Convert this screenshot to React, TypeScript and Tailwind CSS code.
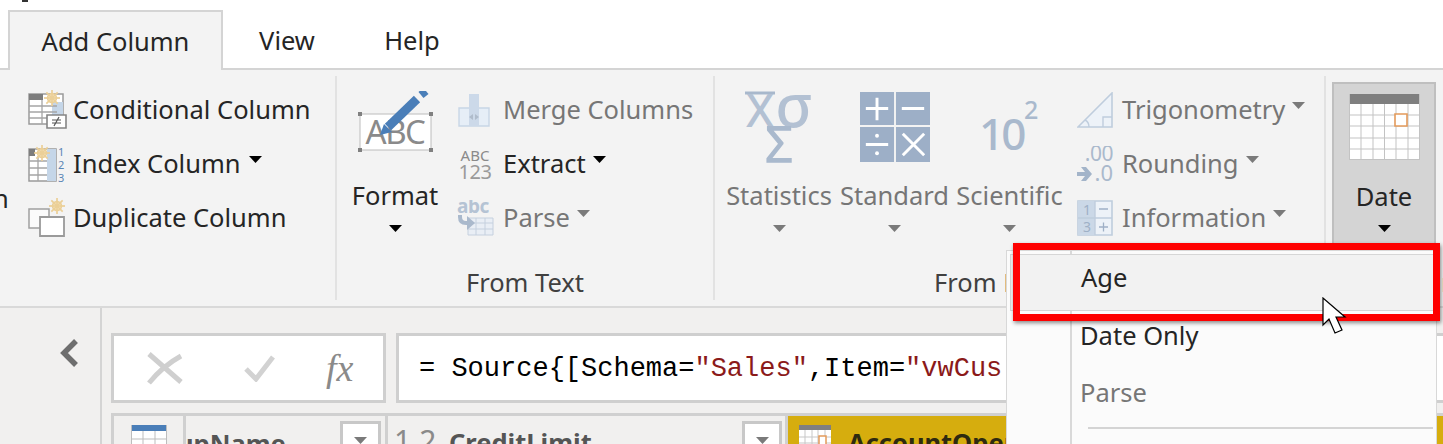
function Caret({ gray = false, className = '' }: { gray?: boolean; className?: string }) {
  return (
    <svg width="13" height="7" viewBox="0 0 13 7" className={className}>
      <path d="M0 0h13L6.500 7z" fill={gray ? '#7a7a7a' : '#000'} />
    </svg>
  );
}

function Spark({ x, y, r = 8 }: { x: number; y: number; r?: number }) {
  const rays = [0, 45, 90, 135];
  return (
    <g stroke="#ebcf97" strokeWidth="1.7">
      <circle cx={x} cy={y} r={r * 0.55} fill="#f6ecd2" />
      {rays.map((a) => (
        <line key={a} x1={x - r} y1={y} x2={x + r} y2={y} transform={`rotate(${a} ${x} ${y})`} />
      ))}
    </g>
  );
}

function ConditionalIcon() {
  return (
    <svg width="40" height="40" viewBox="0 0 40 40">
      <path d="M1 4h34v30H1z" fill="#fff" stroke="#9a9a9a" strokeWidth="1.5" />
      <path d="M1 4h14v6H1z" fill="#7d7d7d" />
      <path d="M24 12h11v14H24z" fill="#c5d6e8" />
      <path d="M1 16h28M1 22h28M1 28h28M14 10v24" stroke="#a5a5a5" strokeWidth="1.3" />
      <Spark x={24} y={8} />
      <path d="M19 25h19v13H19z" fill="#fff" stroke="#858585" strokeWidth="1.6" />
      <path d="M24 30h9M24 33h9M31 27l-5 9" stroke="#555" strokeWidth="1.2" fill="none" />
    </svg>
  );
}

function IndexIcon() {
  return (
    <svg width="40" height="40" viewBox="0 0 40 40">
      <path d="M1 5h27v32H1z" fill="#fff" stroke="#9a9a9a" strokeWidth="1.5" />
      <path d="M1 5h6v7H1z" fill="#7d7d7d" />
      <path d="M19 5h9v32h-9z" fill="#c5d6e8" />
      <path d="M1 17h18M1 24h18M1 31h18M10 12v25" stroke="#a5a5a5" strokeWidth="1.3" />
      <Spark x={14} y={9} />
      <text x="30" y="12" fontSize="11" fill="#5b86b5" fontFamily="Noto Sans, sans-serif">1</text>
      <text x="30" y="25" fontSize="11" fill="#5b86b5" fontFamily="Noto Sans, sans-serif">2</text>
      <text x="30" y="38" fontSize="11" fill="#5b86b5" fontFamily="Noto Sans, sans-serif">3</text>
    </svg>
  );
}

function DuplicateIcon() {
  return (
    <svg width="40" height="40" viewBox="0 0 40 40">
      <path d="M1 11h20v19H1z" fill="#fbfbfb" stroke="#a0a0a0" strokeWidth="1.5" />
      <path d="M12 19h24v19H12z" fill="#fff" stroke="#9a9a9a" strokeWidth="1.8" />
      <Spark x={29} y={8} />
    </svg>
  );
}

function FormatIcon() {
  return (
    <svg width="80" height="72" viewBox="0 -2 80 72">
      <path d="M5 21h71v36H5z" fill="#fff" stroke="#bcbcbc" strokeWidth="1" />
      <g fill="#808080">
        <rect x="3" y="19" width="4" height="4" />
        <rect x="74" y="19" width="4" height="4" />
        <rect x="3" y="55" width="4" height="4" />
        <rect x="74" y="55" width="4" height="4" />
      </g>
      <text x="40" y="51" textAnchor="middle" fontSize="33" fill="#8a8a8a" fontFamily="Noto Sans, sans-serif" letterSpacing="-1.500">ABC</text>
      <path d="M33 34L62 6" stroke="#4a7eb8" strokeWidth="9" fill="none" />
      <path d="M25 42l4-11 8 8z" fill="#4a7eb8" />
      <path d="M66 2l5-4" stroke="#4a7eb8" strokeWidth="8" fill="none" />
    </svg>
  );
}

function MergeIcon() {
  return (
    <svg width="32" height="34" viewBox="0 0 32 34">
      <path d="M1 15h30v18H1z" fill="#e6eef7" stroke="#c8d6e6" strokeWidth="1.4" />
      <path d="M11 1h10v32H11z" fill="#ccd9e9" />
      <path d="M11 24l4-3v6zM21 24l-4-3v6z" fill="#b0bccb" />
    </svg>
  );
}

function ExtractIcon() {
  return (
    <svg width="34" height="34" viewBox="0 0 34 34" fontFamily="Noto Sans, sans-serif">
      <text x="17" y="14" textAnchor="middle" fontSize="15" fill="#8a8a8a">ABC</text>
      <text x="17" y="32" textAnchor="middle" fontSize="20" fill="#9a9a9a" letterSpacing="-0.500">123</text>
    </svg>
  );
}

function ParseIcon() {
  return (
    <svg width="38" height="36" viewBox="0 0 38 36" fontFamily="Noto Sans, sans-serif">
      <text x="0" y="13" fontSize="19" fontWeight="700" fill="#b5c3d4" letterSpacing="-0.500">abc</text>
      <path d="M11 18h25v17H11z" fill="#e9eef5" stroke="#c5d0de" strokeWidth="1" />
      <path d="M11 23h25M11 29h25M19 18v17M28 18v17" stroke="#c5d0de" strokeWidth="1" />
      <path d="M3 15v2q0 6 6 6h4" stroke="#aab9cc" strokeWidth="4" fill="none" />
      <path d="M10 16l8 7-8 7z" fill="#aab9cc" />
    </svg>
  );
}

function StatisticsIcon() {
  return (
    <svg width="72" height="72" viewBox="0 0 72 72" fontFamily="Noto Sans, sans-serif" fill="#b3c1d3">
      <path d="M2 2h30" stroke="#a8b8cc" strokeWidth="3" />
      <text x="17" y="36" textAnchor="middle" fontSize="46" fontWeight="500">X</text>
      <text x="51" y="36" textAnchor="middle" fontSize="60" fontWeight="500">σ</text>
      <text x="36" y="71" textAnchor="middle" fontSize="50" fontWeight="500" fill="#a9b9cd">Σ</text>
    </svg>
  );
}

function StandardIcon() {
  return (
    <svg width="70" height="70" viewBox="0 0 72 72" stroke="#fff" strokeWidth="3">
      <path d="M0 0h35v34H0zM37 0h35v34H37zM0 36h35v36H0zM37 36h35v36H37z" fill="#9dafc7" stroke="none" />
      <path d="M6 17h23M17.500 6v23M43 17h23M6 54h23M44 43l22 22M66 43L44 65" fill="none" />
      <circle cx="17.500" cy="45" r="2" fill="#fff" stroke="none" />
      <circle cx="17.500" cy="63" r="2" fill="#fff" stroke="none" />
    </svg>
  );
}

function ScientificIcon() {
  return (
    <svg width="62" height="54" viewBox="0 0 62 54" fontFamily="Noto Sans, sans-serif">
      <text x="0" y="50" fontSize="44" fontWeight="500" fill="#a9b9cd" letterSpacing="-3">10</text>
      <text x="45" y="19" fontSize="25" fontWeight="500" fill="#a9b9cd">2</text>
    </svg>
  );
}

function TrigIcon() {
  return (
    <svg width="36" height="36" viewBox="0 0 36 36">
      <path d="M1 35L35 1v34z" fill="#edf2f8" stroke="#bfcddd" strokeWidth="1.6" />
      <path d="M26 35V25h9M12 35c0-4-2-6-4-7" stroke="#bfcddd" strokeWidth="1.4" fill="none" />
    </svg>
  );
}

function RoundingIcon() {
  return (
    <svg width="36" height="36" viewBox="0 0 36 36" fontFamily="Noto Sans, sans-serif">
      <text x="36" y="15" textAnchor="end" fontSize="21" fill="#aab9cc" letterSpacing="-0.500">.00</text>
      <text x="36" y="35" textAnchor="end" fontSize="22" fill="#aab9cc">.0</text>
      <path d="M0 26h8l-4-5h5l6 7-6 7H4l4-5H0z" fill="#a3b4c9" />
    </svg>
  );
}

function InformationIcon() {
  return (
    <svg width="36" height="36" viewBox="0 0 36 36" fontFamily="Noto Sans, sans-serif">
      <path d="M1 1h34v34H1z" fill="#edf2f8" stroke="#bfcddd" strokeWidth="1.6" />
      <path d="M1 1h17v34H1z" fill="#cbd8e7" />
      <path d="M1 18h34M18 1v34" stroke="#bfcddd" strokeWidth="1.4" />
      <text x="10" y="15" textAnchor="middle" fontSize="14" fill="#9fb0c6">1</text>
      <text x="10" y="32" textAnchor="middle" fontSize="14" fill="#9fb0c6">3</text>
      <path d="M22 9h9M22 27h9M26.500 22.500v9" stroke="#9fb0c6" strokeWidth="1.3" />
    </svg>
  );
}

function CalendarIcon() {
  return (
    <svg width="71" height="66" viewBox="0 0 71 66">
      <path d="M0 0h71v66H0z" fill="#fff" />
      <path d="M0 0h71v10H0z" fill="#7f7f7f" />
      <path d="M.5 0v66M70.500 0v66M0 65.500h71M12 10v56M24 10v56M35.500 10v56M47 10v56M59 10v56M0 21h71M0 32h71M0 44h71M0 55h71" stroke="#c3c3c3" strokeWidth="1" fill="none" />
      <path d="M46 20h12v12H46z" fill="#fff" stroke="#e39a5b" strokeWidth="1.6" />
    </svg>
  );
}

function TableIcon() {
  return (
    <svg width="36" height="30" viewBox="0 0 36 30">
      <path d="M0 0h36v30H0z" fill="#fff" />
      <path d="M0 0h36v6H0z" fill="#4a7eb8" />
      <path d="M.5 0v30M35.500 0v30M12 6v24M24 6v24M0 14h36M0 22h36" stroke="#bdbdbd" fill="none" />
    </svg>
  );
}

function SmallCalendarIcon() {
  return (
    <svg width="32" height="30" viewBox="0 0 32 30">
      <path d="M0 0h32v30H0z" fill="#fff" />
      <path d="M0 0h32v5H0z" fill="#7f7f7f" />
      <path d="M6 5v25M13 5v25M19 5v25M26 5v25M0 12h32M0 18h32M0 24h32" stroke="#c7c7c7" fill="none" />
      <path d="M20 11h7v9h-7z" fill="#fff" stroke="#e39a5b" strokeWidth="1.5" />
    </svg>
  );
}

function CursorIcon() {
  return (
    <svg width="26" height="40" viewBox="0 0 26 40">
      <path d="M1 1v27l6-6 6 14 7-3-6-13h9z" fill="#fff" stroke="#000" strokeWidth="1.2" />
    </svg>
  );
}

function SmallRow({
  icon,
  label,
  caret,
  muted,
  caretGap = 'ml-[7px]',
  iconBox = 'w-[45px]',
}: {
  icon: React.ReactNode;
  label: string;
  caret?: boolean;
  muted?: boolean;
  caretGap?: string;
  iconBox?: string;
}) {
  return (
    <div className="flex h-[54px] items-center">
      <div className={`flex shrink-0 items-center ${iconBox}`}>{icon}</div>
      <span className={`whitespace-nowrap ${muted ? 'text-[#767676]' : 'text-[#252525]'}`}>{label}</span>
      {caret && <Caret gray={muted} className={`mb-[9px] ${caretGap}`} />}
    </div>
  );
}

function LargeButton({ icon, label, muted, width }: { icon: React.ReactNode; label: string; muted?: boolean; width: string }) {
  return (
    <div className={`flex shrink-0 flex-col items-center ${width}`}>
      <div className="flex h-[84px] items-center pt-[4px]">{icon}</div>
      <span className={`mt-[10px] h-[36px] leading-[36px] ${muted ? 'text-[#767676]' : 'text-[#252525]'}`}>{label}</span>
      <Caret gray={muted} className="mt-[12px]" />
    </div>
  );
}

export default function App() {
  return (
    <div className="relative h-[444px] w-[1443px] overflow-hidden bg-white font-['Noto_Sans',sans-serif] text-[25.5px] leading-none">
      <div className="absolute left-[22px] top-0 h-[2px] w-[6px] bg-[#333]" />

      {/* tabs */}
      <div className="flex h-[70px] items-end border-b-2 border-[#d4d4d4] pl-[8px]">
        <div className="-mb-[2px] flex h-[60px] w-[215px] items-center justify-center border-x-2 border-t-2 border-[#d4d4d4] bg-[#f3f3f3] pt-[2px] text-[#252525]">
          Add Column
        </div>
        <div className="flex h-[58px] w-[128px] items-center justify-center pt-[4px] text-[#252525]">View</div>
        <div className="flex h-[58px] w-[122px] items-center justify-center pt-[4px] text-[#252525]">Help</div>
      </div>

      {/* ribbon */}
      <div className="flex h-[238px] border-b-2 border-[#d9d9d9] bg-[#f3f3f3]">
        <div className="relative my-[6px] w-[337px] shrink-0 border-r-2 border-[#e2e2e2] pl-[28px] pt-[7px]">
          <span className="absolute left-[-7px] top-[110px] text-[#252525]">n</span>
          <SmallRow icon={<ConditionalIcon />} label="Conditional Column" />
          <SmallRow icon={<IndexIcon />} label="Index Column" caret caretGap="ml-[8px]" />
          <SmallRow icon={<DuplicateIcon />} label="Duplicate Column" />
        </div>

        <div className="my-[6px] flex w-[378px] shrink-0 flex-col border-r-2 border-[#e2e2e2]">
          <div className="flex pt-[7px]">
            <LargeButton icon={<FormatIcon />} label="Format" width="w-[116px]" />
            <div className="pl-[5px]">
              <SmallRow icon={<MergeIcon />} label="Merge Columns" muted />
              <SmallRow icon={<ExtractIcon />} label="Extract" caret />
              <SmallRow icon={<div className="-ml-[1px]"><ParseIcon /></div>} label="Parse" caret muted />
            </div>
          </div>
          <div className="mt-[25px] text-center text-[#404040]">From Text</div>
        </div>

        <div className="my-[6px] flex w-[611px] shrink-0 flex-col border-r-2 border-[#e2e2e2]">
          <div className="flex pl-[6px] pt-[7px]">
            <LargeButton icon={<StatisticsIcon />} label="Statistics" muted width="w-[116px]" />
            <LargeButton icon={<StandardIcon />} label="Standard" muted width="w-[115px]" />
            <LargeButton icon={<ScientificIcon />} label="Scientific" muted width="w-[115px]" />
            <div className="pl-[10px]">
              <SmallRow icon={<TrigIcon />} label="Trigonometry" caret muted />
              <SmallRow icon={<RoundingIcon />} label="Rounding" caret muted />
              <SmallRow icon={<InformationIcon />} label="Information" caret muted />
            </div>
          </div>
          <div className="mt-[25px] pl-[219px] text-[#404040]">From Number</div>
        </div>

        <div className="ml-[6px] mt-[12px] flex h-[164px] w-[104px] shrink-0 flex-col items-center border-2 border-[#bfbfbf] bg-[#d4d4d4]">
          <div className="flex h-[86px] items-center"><CalendarIcon /></div>
          <span className="mt-[8px] h-[36px] leading-[36px] text-[#252525]">Date</span>
          <Caret className="mt-[11px]" />
        </div>
      </div>

      {/* formula bar and table header */}
      <div className="flex h-[136px] bg-[#f1f0ef]">
        <div className="flex h-full w-[102px] shrink-0 justify-center border-r-2 border-[#d4d4d4] pl-[40px] pt-[31px]">
          <svg width="20" height="28" viewBox="0 0 20 28">
            <path d="M16 2L4 14l12 12" fill="none" stroke="#6e6e6e" strokeWidth="5.500" />
          </svg>
        </div>
        <div className="min-w-0 flex-1 pl-[9px] pt-[25px]">
          <div className="flex gap-[10px]">
            <div className="flex h-[70px] w-[275px] shrink-0 items-center border-[3px] border-[#cfcfcf] bg-white pl-[32px]">
              <svg width="38" height="36" viewBox="0 0 38 36">
                <path d="M3 4l32 28M35 6C24 12 12 22 3 33" fill="none" stroke="#cfcfcf" strokeWidth="5" />
              </svg>
              <svg width="32" height="28" viewBox="0 0 32 28" className="ml-[60px]">
                <path d="M2 15l10 10L29 3" fill="none" stroke="#d2d2d2" strokeWidth="5" />
              </svg>
              <span className="ml-[50px] font-['Liberation_Serif',serif] text-[38px] italic text-[#8a8a8a]">fx</span>
            </div>
            <div className="flex h-[70px] flex-1 items-center whitespace-pre overflow-hidden border-[3px] border-r-0 border-[#cfcfcf] bg-white pl-[20px] pt-[2px] font-['Liberation_Mono',monospace] text-[27px] text-black">
              <span>= Source{'{'}[Schema=</span>
              <span className="text-[#8b1a1a]">"Sales"</span>
              <span>,Item=</span>
              <span className="text-[#8b1a1a]">"vwCus</span>
            </div>
          </div>

          <div className="mt-[10px] flex h-[40px] border-l-[3px] border-t-[3px] border-[#d0d0d0] font-bold text-[#555]">
            <div className="flex w-[72px] shrink-0 justify-center border-r-[3px] border-[#d0d0d0] pt-[9px]">
              <TableIcon />
            </div>
            <div className="relative w-[202px] shrink-0 overflow-hidden border-r-[3px] border-[#d0d0d0] pt-[15px]">
              <span className="-ml-[9px] inline-block">upName</span>
              <div className="absolute left-[154px] top-[5px] flex h-[34px] w-[41px] justify-center border-[3px] border-[#c8c8c8] bg-white pt-[13px]">
                <Caret gray />
              </div>
            </div>
            <div className="relative flex w-[400px] shrink-0 items-start border-r-[3px] border-[#d0d0d0] pl-[6px] pt-[10px]">
              <span className="w-[55px] text-[30px] font-normal text-[#8a8a8a]">1.2</span>
              <span className="pt-[4px]">CreditLimit</span>
              <div className="absolute left-[354px] top-[5px] flex h-[34px] w-[40px] justify-center border-[3px] border-[#c8c8c8] bg-white pt-[13px]">
                <Caret gray />
              </div>
            </div>
            <div className="flex flex-1 items-start bg-[#d6ad0e] pl-[11px] pt-[9px] text-[#2e2a10]">
              <SmallCalendarIcon />
              <span className="ml-[17px] pt-[5px]">AccountOpened</span>
            </div>
          </div>
        </div>
      </div>

      {/* date dropdown */}
      <span className="absolute left-[1441px] top-[270px] text-[#404040]">n</span>
      <div className="absolute left-[1006px] top-[250px] h-[200px] w-[431px] border border-[#d8d8d8] bg-[#fbfbfb] text-[#252525]">
        <div className="absolute bottom-0 left-[63px] top-0 w-[2px] bg-[#d9d9d9]" />
        <div className="relative ml-[3px] mr-[2px] mt-[3px] flex h-[57px] items-center border border-[#d6d6d6] bg-[#f2f2f2] pb-[10px] pl-[70px]">Age</div>
        <div className="relative flex h-[57px] items-center pb-[8px] pl-[73px]">Date Only</div>
        <div className="relative flex h-[57px] items-center pb-[8px] pl-[73px] text-[#767676]">Parse</div>
        <div className="relative ml-[81px] mr-[3px] mt-[2px] h-[2px] bg-[#d4d4d4]" />
      </div>

      {/* highlight and pointer */}
      <div className="absolute left-[1013px] top-[243px] h-[78px] w-[427px] border-[7px] border-[#fe0000] shadow-[1px_2px_4px_rgba(0,0,0,0.45)]" />
      <div className="absolute left-[1322px] top-[297px]">
        <CursorIcon />
      </div>
    </div>
  );
}
